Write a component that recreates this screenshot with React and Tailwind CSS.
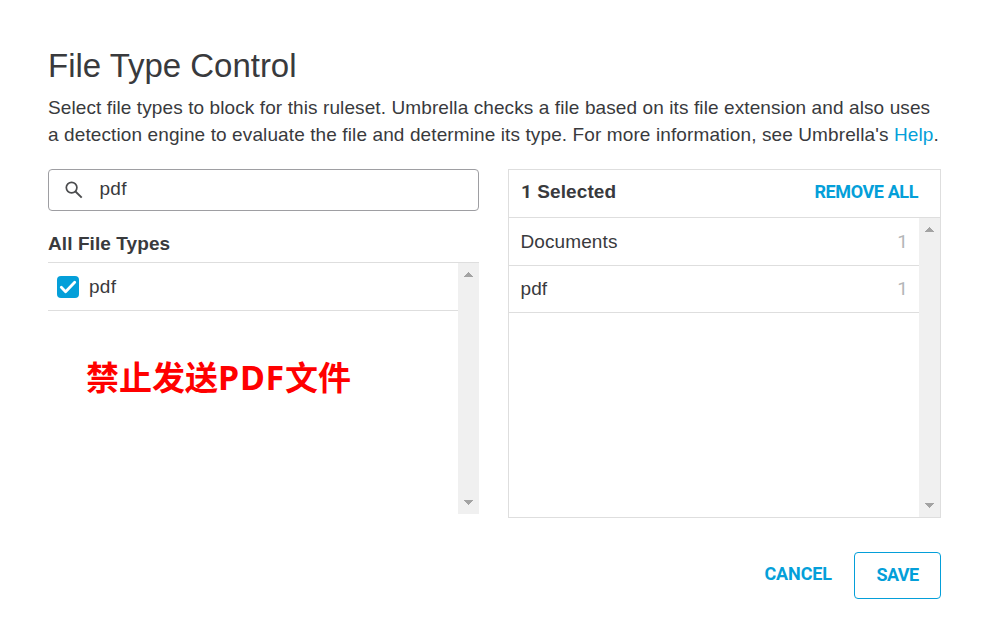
function Scrollbar() {
  return (
    <div className="flex w-[21px] shrink-0 flex-col items-center justify-between bg-[#f0f0f0] py-[9px]">
      <svg width="9" height="5" viewBox="0 0 9 5" fill="#a3a3a3" shapeRendering="crispEdges">
        <path d="M0 5L4.5 0L9 5Z" />
      </svg>
      <svg width="9" height="5" viewBox="0 0 9 5" fill="#a3a3a3" shapeRendering="crispEdges">
        <path d="M0 0L4.5 5L9 0Z" />
      </svg>
    </div>
  );
}

function SelectedRow({ label, count, className }) {
  return (
    <div className={`flex items-baseline justify-between border-b border-[#dedede] pl-[11.5px] pr-[11px] leading-[22px] ${className}`}>
      <span className="tracking-[0.1px]">{label}</span>
      <span className="font-['Roboto',sans-serif] text-[#b4b6b8]">{count}</span>
    </div>
  );
}

export default function App() {
  return (
    <main className="h-[640px] w-[990px] overflow-hidden bg-white px-12 pt-[46px] font-['Liberation_Sans',Arial,sans-serif] text-[19px] text-[#393a3d]">
      <h1 className="h-10 text-[33px] leading-10 tracking-[-0.02px]">File Type Control</h1>
      <p className="mt-2 whitespace-nowrap leading-[27px]">
        <span className="block tracking-[0.1px]">
          Select file types to block for this ruleset. Umbrella checks a file based on its file extension and also uses
        </span>
        <span className="block tracking-[0.11px]">
          a detection engine to evaluate the file and determine its type. For more information, see Umbrella's{" "}
          <a className="text-[#049fd9]">Help</a>.
        </span>
      </p>

      <div className="mt-[21px] flex gap-[29px]">
        <section className="w-[431px]">
          <div className="flex h-[42px] items-center rounded-[4px] border border-[#9e9ea2] pl-4">
            <svg width="18" height="18" viewBox="0 0 18 18" fill="none" stroke="#4b4c4e">
              <circle cx="6.6" cy="6.6" r="5.3" strokeWidth="1.7" />
              <path d="M10.5 10.5L16.7 16.6" strokeWidth="1.9" />
            </svg>
            <span className="ml-[16.5px] pb-[2px] tracking-[0.3px]">pdf</span>
          </div>
          <h2 className="mt-[19px] h-8 font-bold leading-[28px] tracking-[0.08px]">All File Types</h2>
          <div className="flex h-[252px]">
            <div className="flex-1 border-t border-[#dedede]">
              <div className="flex h-12 items-center border-b border-[#dedede] pl-[9px]">
                <span className="mt-px flex size-[22px] items-center justify-center rounded-[4px] bg-[#049fd9]">
                  <svg width="18" height="16" viewBox="0 0 18 16" fill="none" stroke="white" strokeWidth="2.8" strokeLinecap="round" strokeLinejoin="round">
                    <path d="M2.3 8.3L6.6 12.7L15.7 3.2" />
                  </svg>
                </span>
                <span className="ml-[10px] pt-[2px] tracking-[0.3px]">pdf</span>
              </div>
              <p className="ml-[38px] mt-10 whitespace-nowrap font-['Noto_Sans_CJK_SC',sans-serif] text-[33px] font-bold leading-[50px] text-[#ff0000]">
                禁止发送<span className="font-['Noto_Sans',sans-serif] text-[34px] tracking-[0.8px]">PDF</span>文件
              </p>
            </div>
            <div className="flex border-t border-[#dedede]">
              <Scrollbar />
            </div>
          </div>
        </section>

        <section className="flex h-[349px] w-[433px] flex-col border border-[#dedede]">
          <header className="flex h-12 shrink-0 items-center justify-between border-b border-[#dedede] pb-[2px] pl-3 pr-[22px] font-bold">
            <span className="tracking-[0.08px]">
              <span className="font-['Roboto',sans-serif]">1</span> Selected
            </span>
            <button className="pb-[2px] font-['Roboto',sans-serif] text-[18px] tracking-[-0.4px] text-[#049fd9]">REMOVE ALL</button>
          </header>
          <div className="flex flex-1">
            <div className="flex-1">
              <SelectedRow label="Documents" count="1" className="h-12 pt-[13px]" />
              <SelectedRow label="pdf" count="1" className="h-[47px] pt-3" />
            </div>
            <Scrollbar />
          </div>
        </section>
      </div>

      <footer className="mt-[34px] flex h-[47px] w-[893px] items-center justify-end font-['Roboto',sans-serif] text-[18px] font-bold text-[#049fd9]">
        <button className="mb-[5px] mr-[22px] tracking-[-0.1px]">CANCEL</button>
        <button className="h-full w-[87px] rounded-[4px] border border-[#049fd9] pb-[2px] tracking-[-0.6px]">SAVE</button>
      </footer>
    </main>
  );
}
